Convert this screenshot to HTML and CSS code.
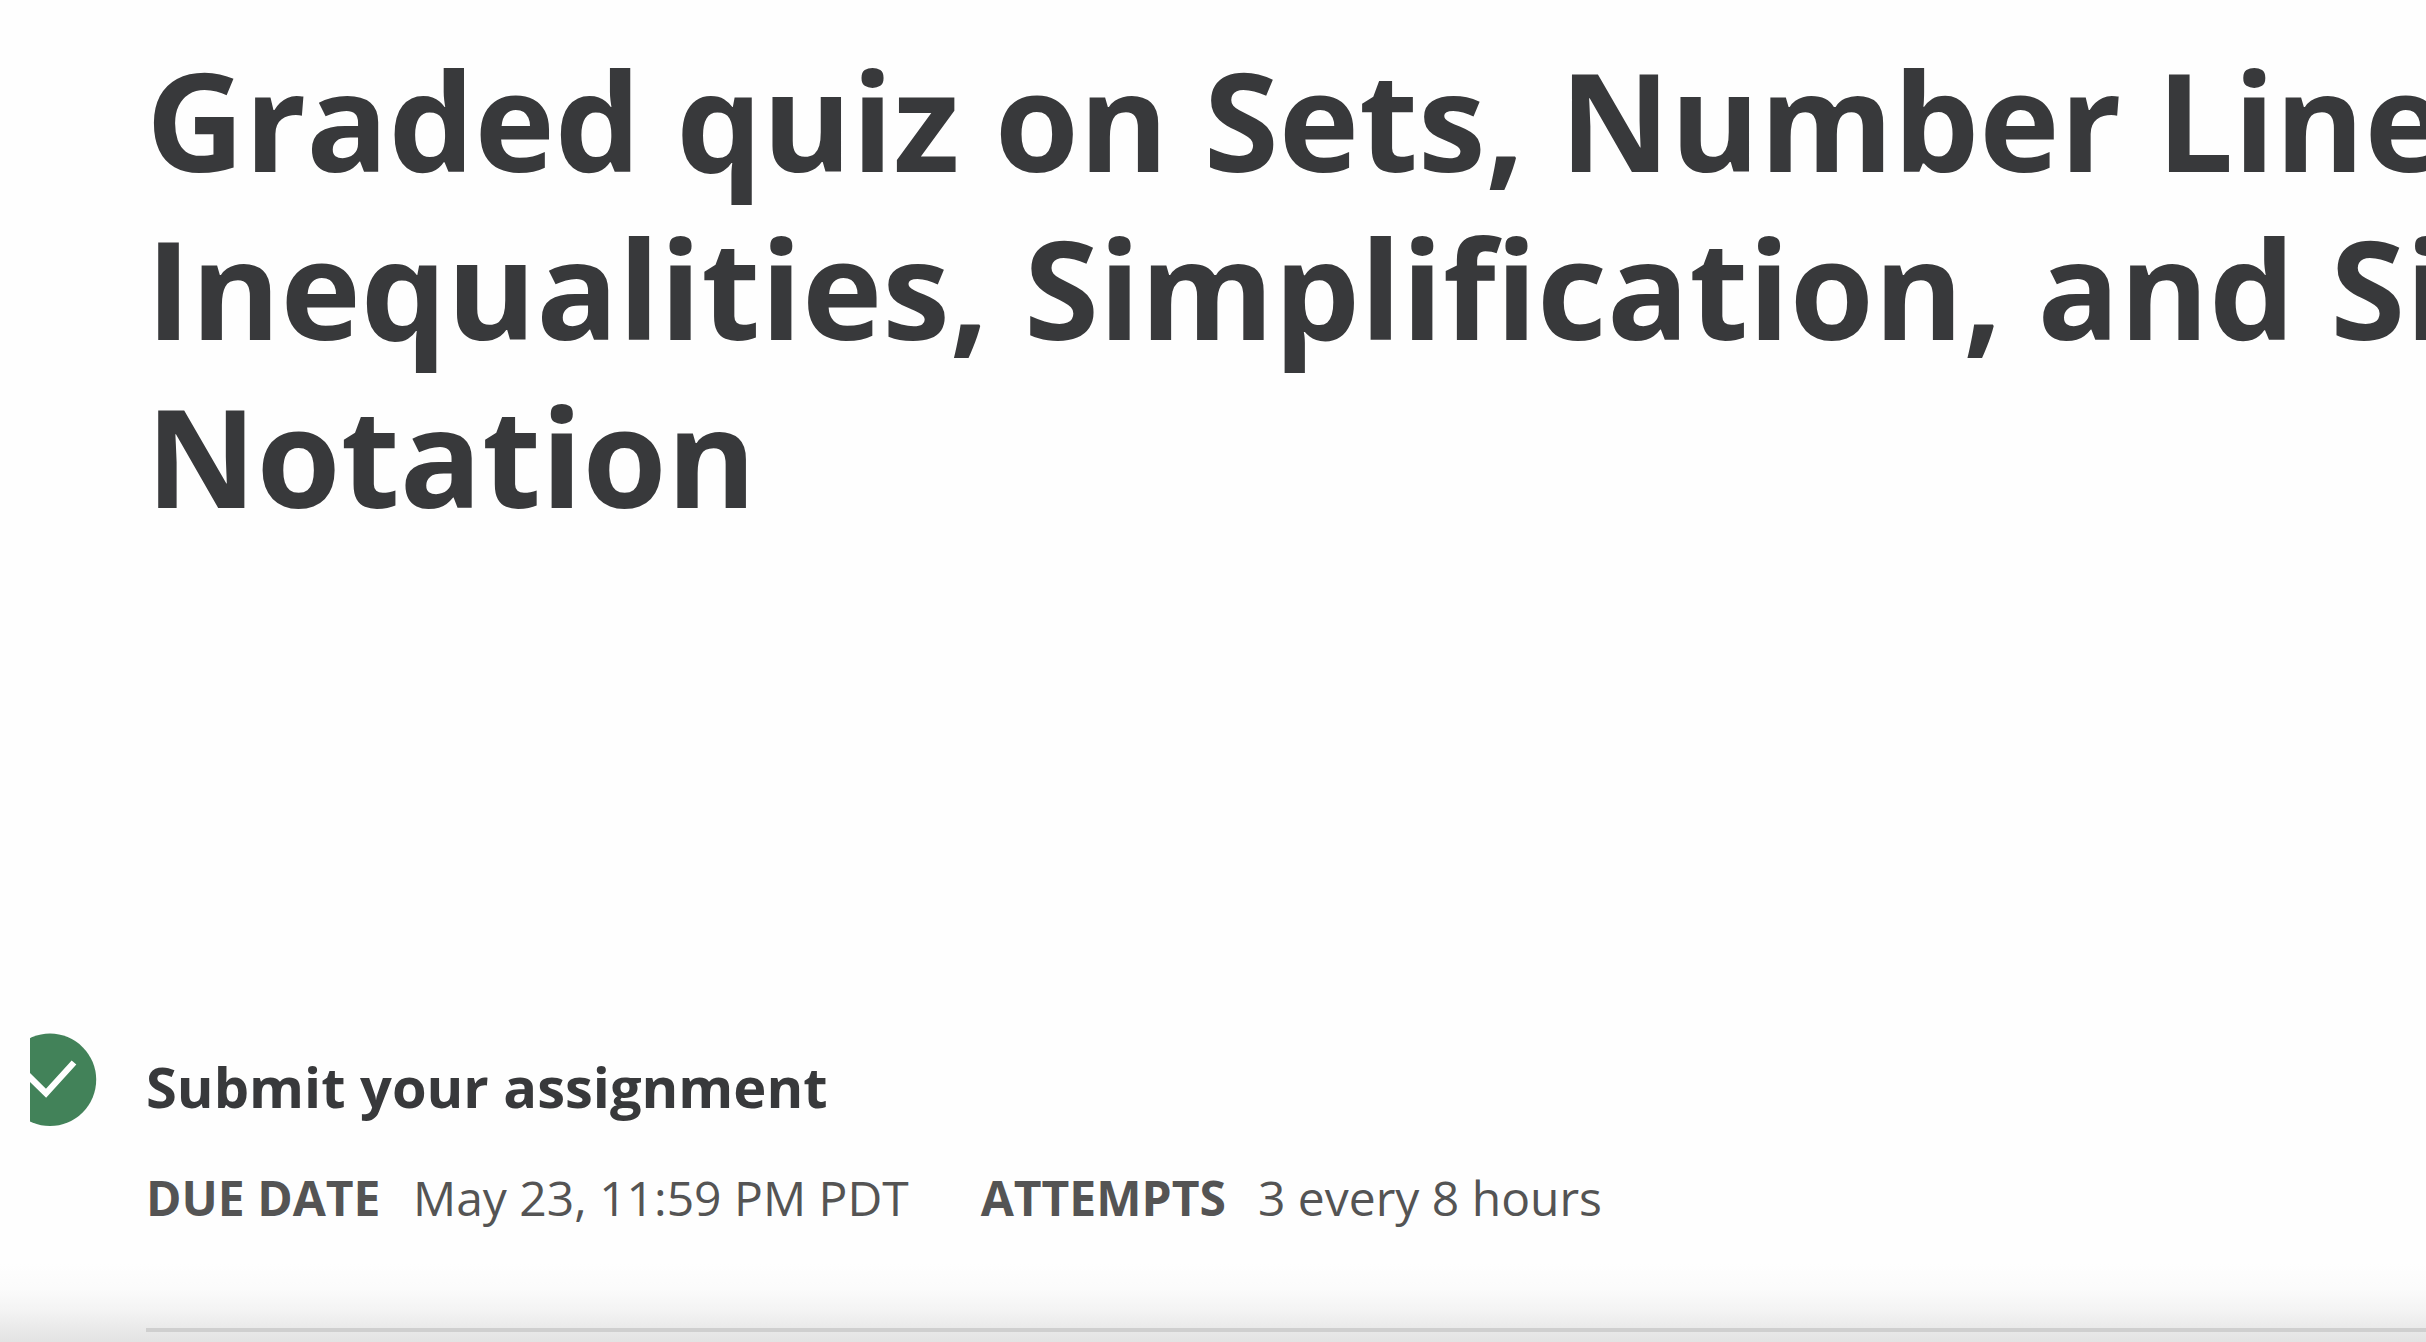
FILE: index.html
```html
<!DOCTYPE html>
<html lang="en">
<head>
<meta charset="utf-8">
<title>Graded quiz</title>
<link rel="stylesheet" href="styles.css">
</head>
<body>
<main class="page">
  <h1 class="title">Graded quiz on Sets, Number Line,<br>Inequalities, Simplification, and Sigma<br>Notation</h1>
  <section class="assignment">
    <div class="status"><svg class="check" viewBox="0 0 94 94"><circle cx="46" cy="46.8" r="46.2"/><path d="M22 40.5 L42 60.3 L70 29.5"/></svg></div>
    <div class="details">
      <h2 class="heading">Submit your assignment</h2>
      <dl class="meta"><dt class="due-label">DUE DATE</dt><dd class="due">May 23, 11:59 PM PDT</dd><dt class="attempts-label">ATTEMPTS</dt><dd class="attempts">3 every 8 hours</dd></dl>
    </div>
  </section>
  <footer class="footer"><hr class="rule"></footer>
</main>
</body>
</html>
```
FILE: styles.css
```css
* { box-sizing: border-box; margin: 0; }
body { background: #fefefe; font-family: "Open Sans", sans-serif; color: #38393b; overflow: hidden; }
.page { width: 2426px; height: 1342px; display: flex; flex-direction: column; overflow: hidden; }
.title { padding: 36px 0 0 146px; height: 1033px; flex: none; font-size: 136px; line-height: 168px; font-weight: 700; white-space: nowrap; }
.assignment { display: flex; height: 231px; flex: none; }
.status { width: 68px; height: 94px; margin-left: 30px; overflow: hidden; display: flex; justify-content: flex-end; }
.check { width: 94px; height: 94px; flex: none; }
.check circle { fill: #428259; }
.check path { fill: none; stroke: #fff; stroke-width: 6.3; }
.details { margin-left: 48px; padding-top: 11px; }
.heading { font-size: 56px; line-height: 84px; font-weight: 700; white-space: nowrap; }
.meta { display: flex; margin-top: 34px; font-size: 48px; line-height: 72px; white-space: nowrap; color: #545454; }
.due-label, .attempts-label { font-weight: 700; }
.due { margin-left: 32.5px; }
.attempts-label { margin-left: 72px; }
.attempts { margin-left: 32px; }
.footer { height: 78px; padding: 64px 0 0 146px; background: linear-gradient(#fefefe 0%, #fbfbfb 32%, #f4f4f4 58%, #eaeaea 82%, #e3e3e3 100%); }
.rule { height: 4px; border: 0; background: #cfcfcf; }
```
